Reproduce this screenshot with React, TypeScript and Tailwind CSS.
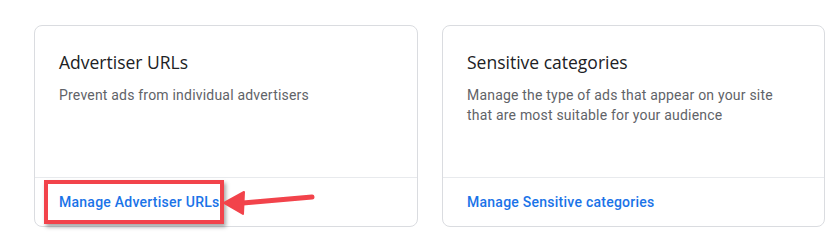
export default function App() {
  return (
    <div className="w-[838px] h-[239px] bg-white pl-[34px] pt-[25px] font-['Roboto',sans-serif]">
      <div className="flex gap-[24px]">
        <div className="relative w-[384px] h-[202px] flex flex-col rounded-[8px] border border-[#dadce0]">
          <div className="flex-1 pl-[24px] pt-[24px]">
            <h2 className="text-[17.5px] leading-[24px] text-[#202124] font-['Open_Sans',sans-serif]">Advertiser URLs</h2>
            <p className="mt-[11px] text-[14px] leading-[20px] tracking-[0.2px] text-[#5f6368]">Prevent ads from individual advertisers</p>
          </div>
          <div className="h-[49px] border-t border-[#e8eaed] pl-[24px] flex items-center">
            <a className="text-[14px] font-medium tracking-[0.25px] text-[#1a73e8]">Manage Advertiser URLs</a>
          </div>
          <div className="absolute left-[9px] top-[154px] w-[180px] h-[44px] border-[4px] border-[#f2434b] shadow-[2px_3px_4px_rgba(0,0,0,0.35)]" />
          <svg className="absolute left-[186px] top-[162px]" width="100" height="28" viewBox="0 0 100 28">
            <path d="M22 15 L91 9" stroke="#f2434b" strokeWidth="5" strokeLinecap="round" />
            <path d="M3 15 L23 4 L22 26 Z" fill="#f2434b" stroke="#f2434b" strokeWidth="2" strokeLinejoin="round" />
          </svg>
        </div>
        <div className="w-[383px] h-[202px] flex flex-col rounded-[8px] border border-[#dadce0]">
          <div className="flex-1 pl-[24px] pt-[24px]">
            <h2 className="text-[17.5px] leading-[24px] text-[#202124] font-['Open_Sans',sans-serif]">Sensitive categories</h2>
            <p className="mt-[11px] w-[330px] text-[14px] leading-[20px] tracking-[0.2px] text-[#5f6368]">
              Manage the type of ads that appear on your site that are most suitable for your audience
            </p>
          </div>
          <div className="h-[49px] border-t border-[#e8eaed] pl-[24px] flex items-center">
            <a className="text-[14px] font-medium tracking-[0.25px] text-[#1a73e8]">Manage Sensitive categories</a>
          </div>
        </div>
      </div>
    </div>
  );
}
